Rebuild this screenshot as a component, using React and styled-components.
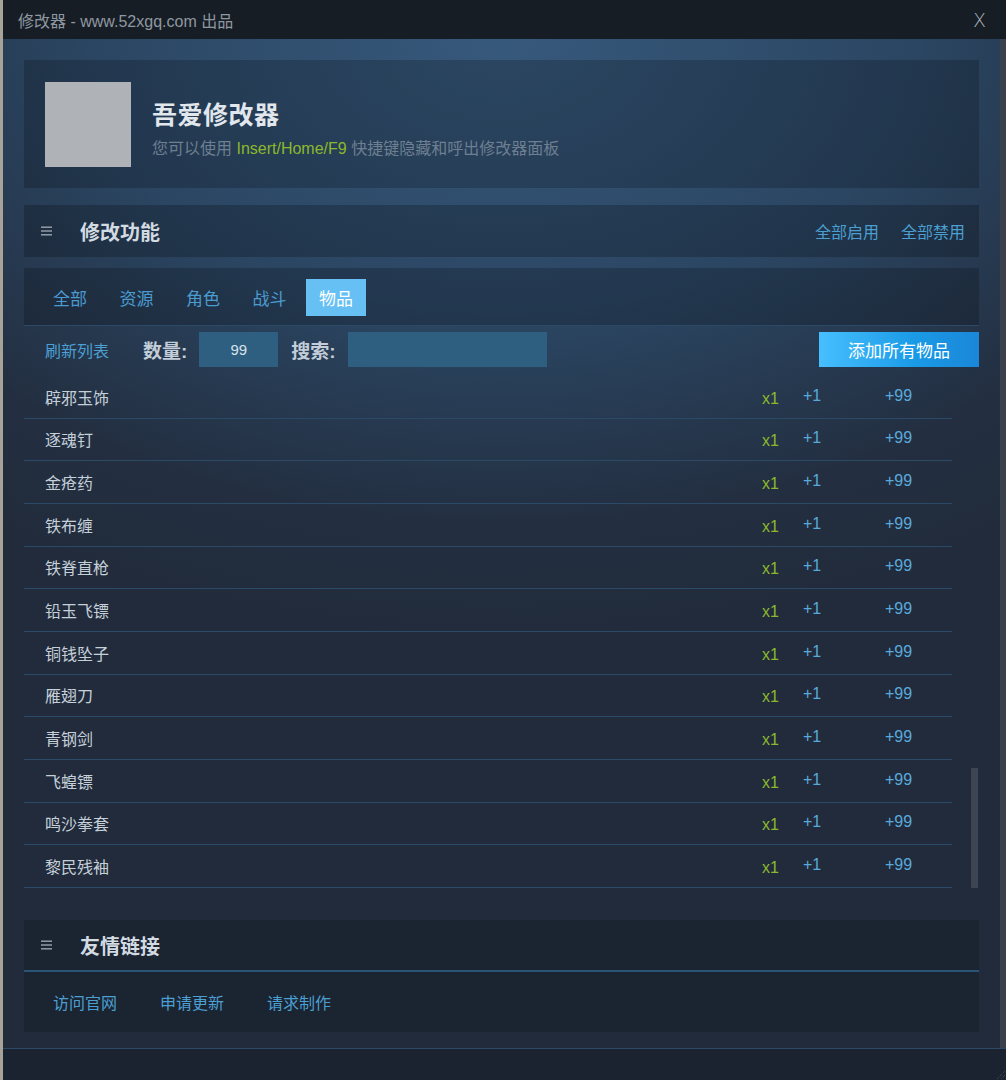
import React from "react";
import styled, { createGlobalStyle } from "styled-components";

const GlobalStyle = createGlobalStyle`
  html, body {
    margin: 0;
    padding: 0;
    background: #a7a398;
    font-family: "Liberation Sans", "Noto Sans CJK SC", sans-serif;
  }
  * { box-sizing: border-box; }
`;

const Window = styled.div`
  margin-left: 3px;
  width: 1003px;
  height: 1080px;
  display: flex;
  flex-direction: column;
  background: #1b2230;
`;

const TitleBar = styled.div`
  height: 39px;
  flex: none;
  display: flex;
  align-items: center;
  justify-content: space-between;
  padding: 0 20px 0 15px;
  background: #171d25;
  color: #8f98a0;
  font-size: 16px;
`;

const Close = styled.span`
  color: #aab2ba;
  font-size: 19px;
  font-family: "DejaVu Sans", sans-serif;
  font-weight: 300;
`;

const Body = styled.div`
  display: flex;
  height: 1010px;
  flex: none;
  border-bottom: 1px solid #2d4b69;
`;

const Content = styled.div`
  flex: 1;
  padding: 21px 21px 16px 21px;
  background: radial-gradient(ellipse 90% 60% at 50% 0%, #37597c 0%, #2b4663 45%, #232f41 80%, #212b3b 100%);
  display: flex;
  flex-direction: column;
`;

const OuterTrack = styled.div`
  width: 6px;
  background: #3a414c;
`;

const Panel = styled.div`
  background: ${(p) => p.$bg || "rgba(0, 0, 0, 0.2)"};
  margin-top: ${(p) => p.$mt || 0}px;
`;

const Hero = styled(Panel)`
  height: 128px;
  display: flex;
  align-items: flex-start;
  padding: 22px 21px;
  gap: 21px;
`;

const Avatar = styled.div`
  width: 86px;
  height: 85px;
  background: #afb2b6;
`;

const HeroText = styled.div`
  display: flex;
  flex-direction: column;
  padding-top: 17px;
`;

const HeroTitle = styled.div`
  font-size: 25px;
  font-weight: 600;
  color: #e1e7ed;
  letter-spacing: 0.5px;
  line-height: 32px;
`;

const HeroSub = styled.div`
  margin-top: 8px;
  font-size: 16px;
  color: #6d7f90;
  line-height: 20px;
`;

const Green = styled.span`
  color: #8cb82c;
`;

const SectionHead = styled.div`
  height: 52px;
  display: flex;
  align-items: center;
  padding: 0 14px 0 17px;
  border-bottom: ${(p) => (p.$line ? "2px solid #2a5475" : "none")};
`;

const Burger = styled.svg`
  width: 11px;
  height: 10px;
  margin-right: 28px;
`;

const SectionTitle = styled.div`
  flex: 1;
  font-size: 20px;
  font-weight: 600;
  color: #d2dae2;
`;

const HeadLinks = styled.div`
  display: flex;
  gap: 22px;
`;

const Link = styled.span`
  font-size: 16px;
  color: #4b9fd2;
`;

const TabBar = styled(Panel)`
  height: 58px;
  display: flex;
  align-items: flex-start;
  padding: 11px 16px 0;
  gap: 6.5px;
  border-bottom: 1px solid #2c4a68;
`;

const Tab = styled.div`
  height: 37px;
  padding: 0 13px;
  display: flex;
  align-items: center;
  font-size: 17px;
  color: ${(p) => (p.$active ? "#ffffff" : "#4b9bd0")};
  background: ${(p) => (p.$active ? "#66c0f4" : "transparent")};
`;

const Toolbar = styled.div`
  margin-top: 6px;
  height: 35px;
  display: flex;
  align-items: center;
  padding-left: 21px;
`;

const Label = styled.span`
  font-size: 19px;
  font-weight: 600;
  color: #c3ced9;
  margin: 0 12px 0 ${(p) => p.$ml}px;
`;

const Input = styled.div`
  width: ${(p) => p.$w}px;
  height: 35px;
  background: #2e5e80;
  color: #d8e2ea;
  font-size: 15px;
  display: flex;
  align-items: center;
  justify-content: center;
`;

const AddButton = styled.div`
  margin-left: auto;
  width: 160px;
  height: 35px;
  display: flex;
  align-items: center;
  justify-content: center;
  font-size: 17px;
  color: #ffffff;
  background: linear-gradient(90deg, #47bfff 0%, #1a9ae6 60%, #1a87d8 100%);
`;

const ListArea = styled.div`
  margin-top: 9px;
  display: flex;
  height: 512px;
`;

const List = styled.div`
  width: 928px;
  display: flex;
  flex-direction: column;
`;

const Row = styled.div`
  height: 42.67px;
  display: grid;
  grid-template-columns: 1fr 41px 82px 67px;
  align-items: center;
  padding-left: 21px;
  border-bottom: 1px solid #2a4a68;
`;

const Name = styled.span`
  font-size: 16px;
  color: #c5d0da;
`;

const Count = styled.span`
  font-size: 16px;
  color: #8cb82c;
  padding-top: 4px;
`;

const Plus = styled.span`
  font-size: 16px;
  color: #5aa9dc;
  padding-bottom: 2px;
`;

const Track = styled.div`
  margin-left: 19px;
  width: 7px;
  display: flex;
  flex-direction: column;
  justify-content: flex-end;
`;

const Thumb = styled.div`
  height: 120px;
  background: #3d4553;
`;

const FooterLinks = styled.div`
  height: 60px;
  display: flex;
  align-items: center;
  padding-left: 29px;
  gap: 43px;
`;

const Bottom = styled.div`
  flex: 1;
  position: relative;
`;

const Grip = styled.svg`
  position: absolute;
  right: 0;
  bottom: 0;
  width: 12px;
  height: 12px;
`;

const items = [
  "辟邪玉饰",
  "逐魂钉",
  "金疮药",
  "铁布缠",
  "铁脊直枪",
  "铅玉飞镖",
  "铜钱坠子",
  "雁翅刀",
  "青钢剑",
  "飞蝗镖",
  "鸣沙拳套",
  "黎民残袖",
];

const tabs = ["全部", "资源", "角色", "战斗", "物品"];

function BurgerIcon() {
  return (
    <Burger viewBox="0 0 11 10">
      <rect x="0" y="0.5" width="11" height="1.4" fill="#9aa3ad" />
      <rect x="0" y="4.3" width="11" height="1.4" fill="#9aa3ad" />
      <rect x="0" y="8.1" width="11" height="1.4" fill="#9aa3ad" />
    </Burger>
  );
}

export default function App() {
  return (
    <>
      <GlobalStyle />
      <Window>
        <TitleBar>
          <span>修改器 - www.52xgq.com 出品</span>
          <Close>X</Close>
        </TitleBar>
        <Body>
          <Content>
            <Hero>
              <Avatar />
              <HeroText>
                <HeroTitle>吾爱修改器</HeroTitle>
                <HeroSub>
                  您可以使用 <Green>Insert/Home/F9</Green> 快捷键隐藏和呼出修改器面板
                </HeroSub>
              </HeroText>
            </Hero>

            <Panel $mt={17} $bg="rgba(0, 0, 0, 0.22)">
              <SectionHead>
                <BurgerIcon />
                <SectionTitle>修改功能</SectionTitle>
                <HeadLinks>
                  <Link>全部启用</Link>
                  <Link>全部禁用</Link>
                </HeadLinks>
              </SectionHead>
            </Panel>

            <TabBar $mt={11}>
              {tabs.map((t) => (
                <Tab key={t} $active={t === "物品"}>
                  {t}
                </Tab>
              ))}
            </TabBar>

            <Toolbar>
              <Link>刷新列表</Link>
              <Label $ml={34}>数量:</Label>
              <Input $w={79}>99</Input>
              <Label $ml={13}>搜索:</Label>
              <Input $w={199} />
              <AddButton>添加所有物品</AddButton>
            </Toolbar>

            <ListArea>
              <List>
                {items.map((name) => (
                  <Row key={name}>
                    <Name>{name}</Name>
                    <Count>x1</Count>
                    <Plus>+1</Plus>
                    <Plus>+99</Plus>
                  </Row>
                ))}
              </List>
              <Track>
                <Thumb />
              </Track>
            </ListArea>

            <Panel $mt={32} $bg="rgba(0, 0, 0, 0.16)">
              <SectionHead $line>
                <BurgerIcon />
                <SectionTitle>友情链接</SectionTitle>
              </SectionHead>
              <FooterLinks>
                <Link>访问官网</Link>
                <Link>申请更新</Link>
                <Link>请求制作</Link>
              </FooterLinks>
            </Panel>
          </Content>
          <OuterTrack />
        </Body>
        <Bottom>
          <Grip viewBox="0 0 12 12">
            <path d="M11 3 L3 11 M11 7 L7 11" stroke="#4a5361" strokeWidth="1" strokeDasharray="1 1" />
          </Grip>
        </Bottom>
      </Window>
    </>
  );
}
